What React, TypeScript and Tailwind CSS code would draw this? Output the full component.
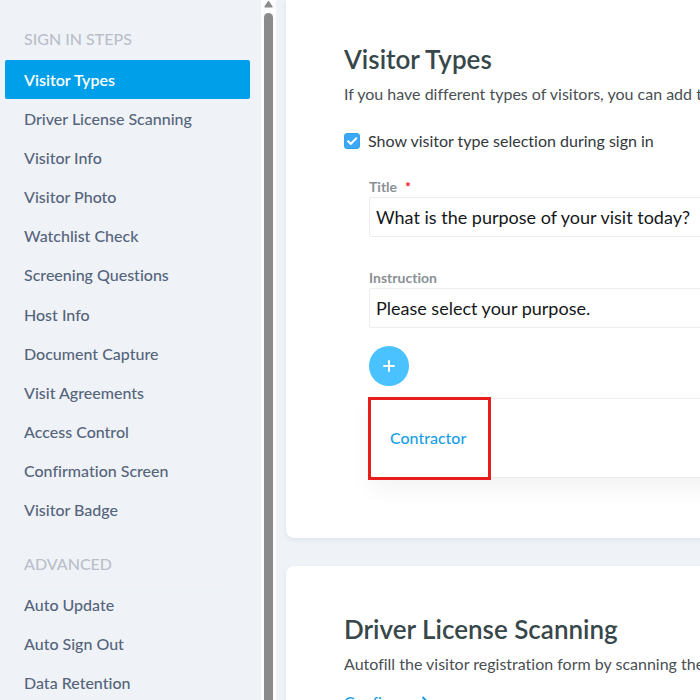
import React from "react";

const signInSteps = [
  "Visitor Types",
  "Driver License Scanning",
  "Visitor Info",
  "Visitor Photo",
  "Watchlist Check",
  "Screening Questions",
  "Host Info",
  "Document Capture",
  "Visit Agreements",
  "Access Control",
  "Confirmation Screen",
  "Visitor Badge",
];

const advanced = ["Auto Update", "Auto Sign Out", "Data Retention"];

function NavItem({ label, active = false }: { label: string; active?: boolean }) {
  return (
    <li className="h-full min-h-[39px]">
      <a
        href="#"
        aria-current={active ? "page" : undefined}
        className={
          active
            ? "flex h-full min-h-[39px] items-center rounded-xs bg-[#009fe9] px-[19px] font-semibold text-white"
            : "flex h-full min-h-[39px] items-center px-[19px] font-medium text-[#56647b]"
        }
      >
        {label}
      </a>
    </li>
  );
}

function Sidebar() {
  return (
    <nav className="w-[261px] shrink-0 pr-[11px] pl-[5px] pt-[27px] text-base">
      <h3 className="px-[19px] pb-[9px] font-medium text-[#b9bec9]">SIGN IN STEPS</h3>
      <ul className="grid h-[470px] grid-rows-12">
        {signInSteps.map((step) => (
          <NavItem key={step} label={step} active={step === "Visitor Types"} />
        ))}
      </ul>
      <h3 className="mx-[19px] border-b border-[#f2f0f3] pt-[22px] pb-2 font-medium text-[#b9bec9]">ADVANCED</h3>
      <ul>
        {advanced.map((item) => (
          <NavItem key={item} label={item} />
        ))}
      </ul>
    </nav>
  );
}

function ScrollTrack() {
  return (
    <div className="flex w-[15px] shrink-0 flex-col items-center bg-[#fcfcfd]" aria-hidden="true">
      <svg width="9" height="8" viewBox="0 0 9 8" className="shrink-0">
        <path d="M4.5 1.6 L8 6.8 H1 Z" fill="#8b8b8b" stroke="#8b8b8b" strokeWidth="1.4" strokeLinejoin="round" />
      </svg>
      <div className="mt-[5px] w-[9px] grow rounded-t-full bg-[#8b8b8b]" />
    </div>
  );
}

function Field({ id, label, value, required = false }: { id: string; label: string; value: string; required?: boolean }) {
  return (
    <div>
      <label htmlFor={id} className="flex h-5 items-center gap-2 text-sm font-bold text-[#8a9095]">
        {label}
        {required && <span className="text-[#f5141d]">*</span>}
      </label>
      <input
        id={id}
        type="text"
        defaultValue={value}
        required={required}
        className="h-10 w-full rounded-xs border border-[#ececee] bg-white px-1.5 text-lg text-[#14171a] outline-none"
      />
    </div>
  );
}

export default function App() {
  return (
    <div className="flex h-screen overflow-hidden bg-[#eff3f8] font-['Lato',sans-serif] [font-variant-ligatures:no-common-ligatures]">
      <Sidebar />
      <ScrollTrack />
      <main className="min-w-0 flex-1 overflow-hidden pl-2.5">
        <section className="w-[900px] rounded-b-lg bg-white px-[58px] pt-[39px] pb-[60px] shadow-[0_2px_5px_rgba(60,80,110,0.09)]">
          <h2 className="text-[26px] leading-10 font-semibold text-[#37474a]">Visitor Types</h2>
          <p className="pt-[3px] text-base leading-6 text-[#4a4f54]">
            If you have different types of visitors, you can add them here.
          </p>
          <label className="mt-[23px] flex h-6 items-center gap-2 text-base text-[#33383c]">
            <span className="relative size-4">
              <input
                type="checkbox"
                defaultChecked
                className="peer block size-4 appearance-none rounded-[3px] border border-[#35a2ee] checked:bg-[#3ba9f8]"
              />
              <svg
                viewBox="0 0 16 16"
                className="pointer-events-none absolute inset-0 hidden peer-checked:block"
                fill="none"
                stroke="white"
                strokeWidth="2"
              >
                <path d="M3.5 7.8 L6.8 10.8 L12.8 4.8" />
              </svg>
            </span>
            Show visitor type selection during sign in
          </label>
          <div className="pt-6 pl-[25px]">
            <div className="flex flex-col gap-[31px]">
              <Field id="title" label="Title" value="What is the purpose of your visit today?" required />
              <Field id="instruction" label="Instruction" value="Please select your purpose." />
            </div>
            <button
              type="button"
              aria-label="Add visitor type"
              className="mt-[18px] flex size-10 items-center justify-center rounded-full bg-[#49c2ff]"
            >
              <svg width="14" height="14" viewBox="0 0 14 14" stroke="white" strokeWidth="2" strokeLinecap="round">
                <path d="M7 2 V12 M2 7 H12" />
              </svg>
            </button>
            <div className="relative mt-3 flex h-20 items-center rounded-md border border-[#ececef] bg-white px-5 shadow-[0_10px_24px_rgba(0,0,0,0.05)]">
              <a href="#" className="text-base font-medium text-[#189fe8]">
                Contractor
              </a>
              <div className="pointer-events-none absolute -top-0.5 -left-0.5 h-[83px] w-[123px] border-3 border-[#e81e1e]" />
            </div>
          </div>
        </section>
        <section className="mt-7 w-[900px] rounded-lg bg-white px-[58px] pt-[43px] pb-10 shadow-[0_2px_5px_rgba(60,80,110,0.09)]">
          <h2 className="text-[26px] leading-10 font-semibold text-[#37474a]">Driver License Scanning</h2>
          <p className="pt-[3px] text-base leading-6 text-[#4a4f54]">
            Autofill the visitor registration form by scanning the visitor's driver license.
          </p>
          <a href="#" className="mt-[10px] flex h-8 items-center gap-2 text-base font-medium text-[#189fe8]">
            Configure
            <svg width="8" height="12" viewBox="0 0 8 12" fill="none" stroke="currentColor" strokeWidth="2">
              <path d="M1.5 1 L6.5 6 L1.5 11" />
            </svg>
          </a>
        </section>
      </main>
    </div>
  );
}
